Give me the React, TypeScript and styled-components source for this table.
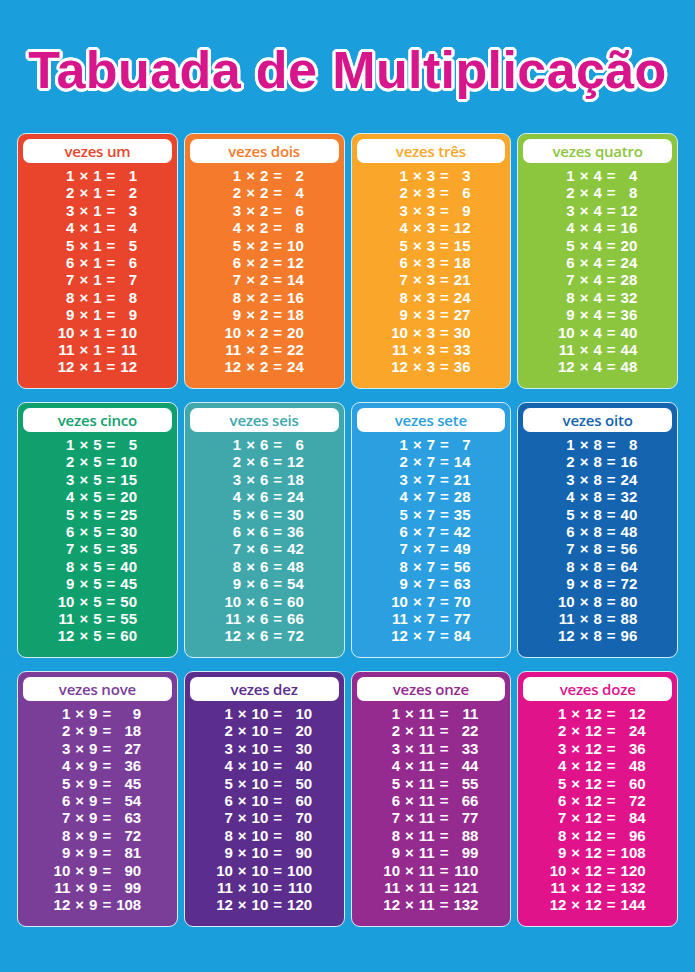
import styled, { createGlobalStyle } from "styled-components";

const GlobalStyle = createGlobalStyle`
  html, body {
    margin: 0;
    padding: 0;
    background: #1b9fdc;
  }
`;

const Page = styled.div`
  width: 695px;
  min-height: 972px;
  box-sizing: border-box;
  background: #1b9fdc;
  padding: 0 17px 45px 17px;
  font-family: "Open Sans", "Liberation Sans", sans-serif;
`;

const Title = styled.h1`
  margin: 0;
  height: 133px;
  display: flex;
  align-items: center;
  justify-content: center;
  padding-top: 6px;
  box-sizing: border-box;
  font-family: "Liberation Sans", Arial, sans-serif;
  font-weight: 700;
  font-size: 52px;
  color: #d6168a;
  letter-spacing: 0.4px;
  text-shadow:
    3px 0 0 #fff, -3px 0 0 #fff, 0 3px 0 #fff, 0 -3px 0 #fff,
    2px 2px 0 #fff, -2px 2px 0 #fff, 2px -2px 0 #fff, -2px -2px 0 #fff,
    3px 1px 0 #fff, -3px 1px 0 #fff, 3px -1px 0 #fff, -3px -1px 0 #fff,
    1px 3px 0 #fff, -1px 3px 0 #fff, 1px -3px 0 #fff, -1px -3px 0 #fff;
`;

const Grid = styled.div`
  display: grid;
  grid-template-columns: repeat(4, 1fr);
  column-gap: 6px;
  row-gap: 13px;
`;

const Card = styled.div<{ $color: string }>`
  height: 256px;
  box-sizing: border-box;
  background: ${(p) => p.$color};
  border: 1.5px solid #d3ecf8;
  border-radius: 9px;
  padding: 5px 5px 0 5px;
  display: flex;
  flex-direction: column;
`;

const Header = styled.div<{ $color: string }>`
  height: 24px;
  background: #fff;
  border-radius: 7px;
  display: flex;
  align-items: center;
  justify-content: center;
  color: ${(p) => p.$color};
  font-size: 15px;
  font-weight: 600;
  letter-spacing: -0.2px;
`;

const Rows = styled.div`
  margin-top: 4px;
  display: grid;
  grid-template-columns: auto auto auto auto auto;
  justify-content: center;
  column-gap: 5px;
  grid-auto-rows: 17.4px;
  align-items: center;
  color: #fff;
  font-family: "Liberation Sans", Arial, sans-serif;
  font-size: 15px;
  font-weight: 700;
  line-height: 17.4px;
`;

const Num = styled.span<{ $align?: string }>`
  text-align: ${(p) => p.$align || "left"};
`;

const Op = styled.span`
  text-align: center;
`;

const tables = [
  { name: "um", color: "#e9452c" },
  { name: "dois", color: "#f47b2b" },
  { name: "três", color: "#f9a629" },
  { name: "quatro", color: "#8cc63e" },
  { name: "cinco", color: "#0fa06d" },
  { name: "seis", color: "#40a8ab" },
  { name: "sete", color: "#2b9fdf" },
  { name: "oito", color: "#1564b0" },
  { name: "nove", color: "#7b3e98" },
  { name: "dez", color: "#5b2d8c" },
  { name: "onze", color: "#952b8e" },
  { name: "doze", color: "#e1138b" },
];

const factors = [1, 2, 3, 4, 5, 6, 7, 8, 9, 10, 11, 12];

export default function App() {
  return (
    <Page>
      <GlobalStyle />
      <Title>Tabuada de Multiplicação</Title>
      <Grid>
        {tables.map((t, i) => {
          const n = i + 1;
          return (
            <Card key={t.name} $color={t.color}>
              <Header $color={t.color}>vezes {t.name}</Header>
              <Rows>
                {factors.map((f) => [
                  <Num key={`a${f}`} $align="right">{f}</Num>,
                  <Op key={`x${f}`}>×</Op>,
                  <Num key={`b${f}`}>{n}</Num>,
                  <Op key={`e${f}`}>=</Op>,
                  <Num key={`r${f}`} $align="right">{f * n}</Num>,
                ])}
              </Rows>
            </Card>
          );
        })}
      </Grid>
    </Page>
  );
}
